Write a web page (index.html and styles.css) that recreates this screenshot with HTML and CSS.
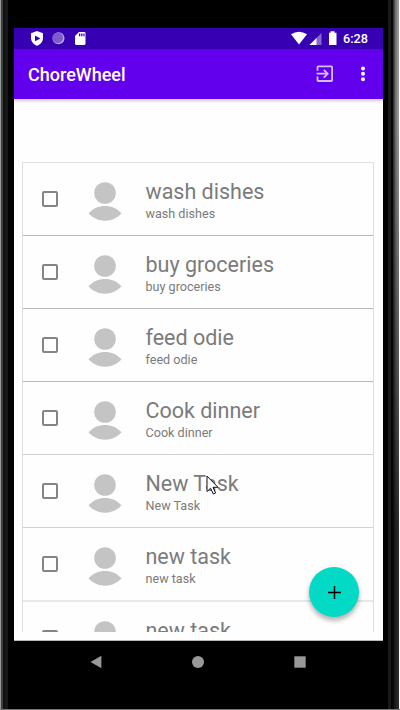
FILE: index.html
```
<!DOCTYPE html>
<html lang="en">
<head>
<meta charset="utf-8">
<title>ChoreWheel</title>
<link rel="stylesheet" href="styles.css">
</head>
<body>
<svg class="defs" width="0" height="0">
  <symbol id="person" viewBox="0 0 34 40"><circle cx="17" cy="11" r="10.8" fill="#c4c4c4"/><path d="M.5 31.3C9 21.5 25 21.5 33.5 31.3C25 41.2 9 41.2.5 31.3z" fill="#c4c4c4"/></symbol>
</svg>
<div class="phone">
  <div class="screen">
    <header class="status">
      <svg class="status-left" width="60" height="21" viewBox="0 0 60 21">
        <path d="M7 3L13 5.2V10C13 13.5 10.4 16.5 7 17.8C3.6 16.5 1 13.5 1 10V5.2z" fill="#fff"/>
        <path d="M5 7.6L10.4 10.4L5 13.2z" fill="#3700b3"/>
        <circle cx="28.5" cy="10.3" r="6" fill="#b9a5e3"/><circle cx="27.8" cy="9.8" r="5.3" fill="#7d5bce"/>
        <path d="M49 4H54.2Q55.5 4 55.5 5.3V15.6Q55.5 17 54.2 17H46.3Q45 17 45 15.6V8z" fill="#fff"/>
        <path d="M49 5.4h1.3v2.8H49zM51.2 5.4h1.3v2.8h-1.3zM53.4 5.4h1.2v2.8h-1.2z" fill="#3700b3"/>
      </svg>
      <svg class="status-right" width="48" height="21" viewBox="0 0 48 21">
        <path d="M0 6.2Q8 1.2 16 6.2L8 16.4z" fill="#fff"/>
        <path d="M30.5 5V17H18.500z" fill="#8766d1"/><path d="M25.5 10V17H18.500z" fill="#fff"/>
        <path d="M39.5 3.3h4v1.4h2V17H38V4.700h1.500z" fill="#fff"/>
      </svg>
      <span class="clock">6:28</span>
    </header>
    <div class="appbar">
      <h1>ChoreWheel</h1>
      <svg class="exit" width="18" height="18" viewBox="0 0 18 18" fill="none" stroke="#d5bffa" stroke-width="1.8">
        <path d="M1.500 5.800V2.200Q1.500 1.400 2.300 1.400H15.300Q16.100 1.400 16.100 2.200V15.200Q16.100 16 15.300 16H2.300Q1.500 16 1.500 15.200V11.600M.6 8.700H11.500M7.800 4.800L11.700 8.700L7.800 12.600"/>
      </svg>
      <svg class="more" width="6" height="18" viewBox="0 0 6 18" fill="#fff"><circle cx="3" cy="3.4" r="2"/><circle cx="3" cy="8.8" r="2"/><circle cx="3" cy="14.2" r="2"/></svg>
    </div>
    <main class="content">
      <ul class="list">
        <li><i class="check"></i><svg class="avatar"><use href="#person"/></svg><div><h2>wash dishes</h2><p>wash dishes</p></div></li>
        <li><i class="check"></i><svg class="avatar"><use href="#person"/></svg><div><h2>buy groceries</h2><p>buy groceries</p></div></li>
        <li><i class="check"></i><svg class="avatar"><use href="#person"/></svg><div><h2>feed odie</h2><p>feed odie</p></div></li>
        <li class="light"><i class="check"></i><svg class="avatar"><use href="#person"/></svg><div><h2>Cook dinner</h2><p>Cook dinner</p></div></li>
        <li class="light"><i class="check"></i><svg class="avatar"><use href="#person"/></svg><div><h2>New Task</h2><p>New Task</p></div></li>
        <li class="last"><i class="check"></i><svg class="avatar"><use href="#person"/></svg><div><h2>new task</h2><p>new task</p></div></li>
        <li><i class="check"></i><svg class="avatar"><use href="#person"/></svg><div><h2>new task</h2></div></li>
      </ul>
      <button class="fab" aria-label="Add"><svg width="14" height="14" viewBox="0 0 14 14" stroke="#000" stroke-width="1.5"><path d="M7.500 1V14M1 7.500H14"/></svg></button>
      <svg class="cursor" width="14" height="21" viewBox="0 0 14 21"><path d="M1 1V16.5L4.6 13.2L7.3 19L9.6 18L7 12.3H12z" fill="#fff" stroke="#101020"/></svg>
    </main>
  </div>
  <nav class="nav">
    <svg width="220" height="14" viewBox="0 0 220 14" fill="#999"><path d="M.5 7L11.4.8V13.2z"/><circle cx="108" cy="7" r="6"/><path d="M204.300 1.300h11.400v11.400h-11.400z"/></svg>
  </nav>
</div>
</body>
</html>
```
FILE: styles.css
```
* { box-sizing: border-box; margin: 0; padding: 0; }
body { width: 400px; height: 710px; overflow: hidden; background: #000; font-family: Roboto, sans-serif; }
.defs { position: absolute; }
.phone {
  width: 400px; height: 710px; padding: 28px 17px 0 14px; border-bottom: 1px solid #777;
  background:
    linear-gradient(90deg, #999 0 1px, #3b4040 1px 3px, #101010 3px 5px, #161616 5px 8px, transparent 8px) left / 14px 100% no-repeat,
    linear-gradient(#fff, #fff) right / 1px 100% no-repeat,
    linear-gradient(transparent 15%, #000b 75%) right / 7px 100% no-repeat,
    linear-gradient(90deg, transparent 5px, #191919 5px 8px, #050505 8px 10px, #333 10px 11px, #666 12px, #989898 15px, #999 17px) right / 17px 100% no-repeat,
    #000;
}
.screen { width: 369px; height: 613px; display: flex; flex-direction: column; background: #fefefe; border-bottom: 1px solid #bbb; }
.status { height: 21px; flex: none; display: flex; align-items: center; background: #3700b3; padding: 0 12px 0 16px; color: #fff; }
.status-right { margin-left: auto; }
.clock { width: 28px; margin-left: 4px; font-size: 12.700px; font-weight: 500; line-height: 21px; }
.appbar { height: 50px; flex: none; display: flex; align-items: center; background: #6200ee; padding: 2px 17px 0 14px; color: #fff; box-shadow: 0 2px 3px #0003; position: relative; }
.appbar h1 { font-size: 18px; font-weight: 500; line-height: 24px; }
.exit { margin-left: auto; margin-top: -2px; }
.more { margin: -2px 0 0 26px; }
.content { flex: 1; min-height: 0; padding: 63px 9px 8px 8px; position: relative; }
.list { height: 470px; overflow: hidden; list-style: none; border: 1px solid #e0e0e0; border-bottom: 0; }
.list li { height: 73px; display: flex; border-bottom: 1px solid #b8b8b8; }
.list li.light { border-color: #d2d2d2; }
.list li.last { height: 74px; border-bottom: 2px solid #e8e8e8; }
.check { width: 16px; height: 16px; flex: none; margin: 28px 0 0 19px; border: 2px solid #858585; border-radius: 2px; }
.avatar { width: 34px; height: 40px; flex: none; margin: 19px 0 0 30px; }
.list li div { margin: 15px 0 0 23.500px; color: #7b7b7b; white-space: nowrap; }
.list h2 { font-size: 21.500px; font-weight: 400; line-height: 28px; }
.list p { font-size: 12.600px; line-height: 18px; margin-top: -1px; }
.fab { position: absolute; left: 295px; top: 468px; width: 50px; height: 50px; border: 0; border-radius: 50%; background: #03dac5; box-shadow: 0 4px 4px #0003, 0 2px 6px #0002; display: flex; align-items: center; justify-content: center; }
.cursor { position: absolute; left: 192px; top: 376px; }
.nav { height: 68px; padding: 14px 0 0 76px; }
.nav svg { display: block; }
```
